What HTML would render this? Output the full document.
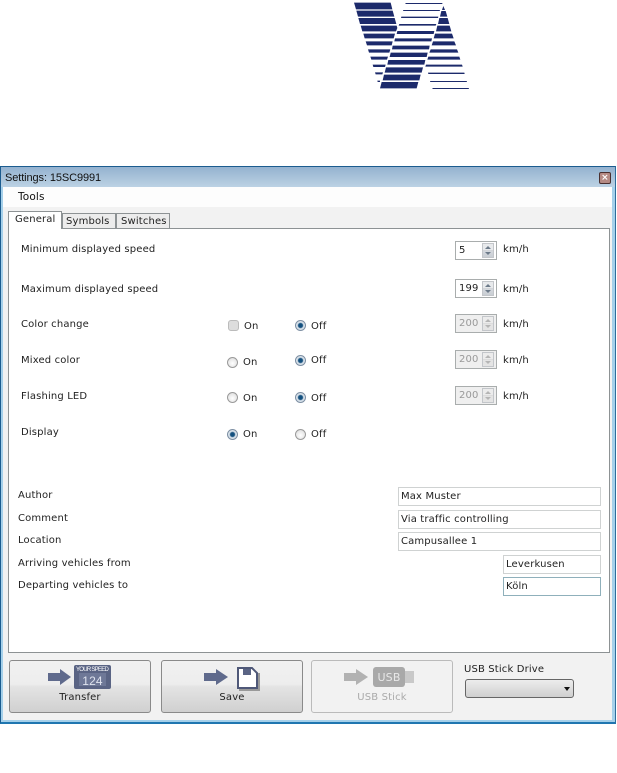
<!DOCTYPE html>
<html><head><meta charset="utf-8"><style>
html,body{margin:0;padding:0;background:#fff}
#p{position:relative;width:617px;height:773px;overflow:hidden;background:#fff;font-family:"DejaVu Sans",sans-serif;font-size:10px;color:#222;letter-spacing:.15px}
#p div{position:absolute;box-sizing:border-box}
.t{line-height:14px;height:14px;white-space:nowrap}
.in{background:#fff;border:1px solid #cfd2d2;line-height:18px;padding-left:2px;white-space:nowrap}
.sp{width:42px;height:19px;background:#fff;border:1px solid #a9adad;line-height:18px;padding-left:3px}
.sp.d{background:#efefef;color:#999}
.sb{left:26px;top:1px;width:12px;height:15px;background:linear-gradient(#e8eaec 0,#e8eaec 48%,#a9adb3 50%,#d5d9de 54%,#c9ced4 100%);border:1px solid #c3c6ca}
.sp.d .sb{background:linear-gradient(#ececec 0,#ececec 48%,#bbb 50%,#e4e4e4 54%)}
.sb:before,.sb:after{content:"";position:absolute;left:2px;width:0;height:0;border:3px solid transparent}
.sb:before{top:-1px;border-bottom:3px solid #6d7b8a}
.sb:after{top:8px;border-top:3px solid #6d7b8a}
.sp.d .sb:before{border-bottom-color:#b5b5b5}.sp.d .sb:after{border-top-color:#b5b5b5}
.r{width:11px;height:11px;border-radius:50%;border:1px solid #9a9a9a;background:radial-gradient(circle at 50% 60%,#fff,#d8d8d8)}
.r.c{background:radial-gradient(circle,#0f4f80 0,#17527f 32%,#cfdbe6 48%,#dfe6ec 70%);border-color:#7d8fa3}
.b{width:142px;height:53px;border:1px solid #8a8a8a;border-radius:3px;background:linear-gradient(#f1f1f1 0,#ededed 46%,#e4e4e4 50%,#d0d0d0 100%);text-align:center}
</style></head><body><div id="p">
<svg style="position:absolute;left:340px;top:0" width="140" height="100" viewBox="0 0 420 300"><g fill="#1c2a6b">
<polygon points="42,8 152,8 157,28 48,28"/><polygon points="49,32 158,32 163,50 54,50"/><polygon points="55,54 164,54 169,72 60,72"/><polygon points="62,77 170,77 172,84 168,94 67,94"/><polygon points="70,101 165,101 161,115 74,115"/><polygon points="77,124 158,124 155,136 81,136"/><polygon points="84,148 151,148 148,158 87,158"/><polygon points="91,170 144,170 141,179 94,179"/><polygon points="98,194 137,194 135,201 100,201"/><polygon points="105,217 129,217 127,223 107,223"/><polygon points="112,242 120,242 120,246 113,246"/>
<polygon points="197,9 307,9 307,12 196,12"/><polygon points="190,30 300,30 299,33 189,33"/><polygon points="184,50 295,50 294,54 183,54"/><polygon points="178,72 289,72 287,77 176,77"/><polygon points="172,93 283,93 281,102 170,102"/><polygon points="165,115 276,115 274,124 163,124"/><polygon points="158,137 269,137 267,148 156,148"/><polygon points="152,158 263,158 260,171 149,171"/><polygon points="145,180 256,180 253,194 142,194"/><polygon points="138,202 249,202 245,218 134,218"/><polygon points="132,224 242,224 238,241 128,241"/><polygon points="125,246 235,246 230,265 120,265"/>
<polygon points="310,18 315,30 306,30"/><polygon points="304,33 317,33 322,50 300,50"/><polygon points="298,54 323,54 328,72 294,72"/><polygon points="292,77 329,77 334,94 288,94"/><polygon points="285,101 336,101 341,115 281,115"/><polygon points="279,124 343,124 348,136 275,136"/><polygon points="272,148 351,148 355,158 268,158"/><polygon points="265,170 358,170 361,179 262,179"/><polygon points="258,194 366,194 368,200 256,200"/><polygon points="264,218 373,218 374,222 265,222"/><polygon points="270,243 380,243 381,246 271,246"/><polygon points="277,264 386,264 387,267 278,267"/>
</g></svg>

<div style="left:0;top:166px;width:616px;height:558px;background:#a5d0ea;border:1px solid #1b5c8f;border-right-color:#2c6d9c;border-bottom:2px solid #1f76b0"></div>
<div style="left:1px;top:167px;width:614px;height:20px;background:linear-gradient(#94b2cf,#bcd2e4)"></div>
<div class="t" style="left:5px;top:171px;font-family:'Liberation Sans',sans-serif;font-size:11px;color:#111;letter-spacing:-.1px">Settings: 15SC9991</div>
<div style="left:599px;top:172px;width:12px;height:12px;background:#b58a84;border:1px solid #4a3030;border-radius:2px;color:#fff;font-size:9px;line-height:10px;text-align:center;font-weight:bold">×</div>
<div style="left:3px;top:187px;width:609px;height:533px;background:#f2f2f2"></div>
<div style="left:3px;top:187px;width:609px;height:20px;background:#fdfdfd"></div>
<div class="t" style="left:18px;top:190px;font-size:10.5px;color:#111">Tools</div>

<div style="left:8px;top:228px;width:602px;height:425px;background:#fff;border:1px solid #8d9294"></div>
<div style="left:62px;top:213px;width:54px;height:16px;background:#ececec;border:1px solid #8d9294"></div>
<div style="left:116px;top:213px;width:54px;height:16px;background:#ececec;border:1px solid #8d9294"></div>
<div style="left:8px;top:211px;width:54px;height:18px;background:#fff;border:1px solid #8d9294;border-bottom:none"></div>
<div class="t" style="left:15px;top:213px">General</div>
<div class="t" style="left:66px;top:215px">Symbols</div>
<div class="t" style="left:121px;top:215px">Switches</div>

<div class="t" style="left:21px;top:243px">Minimum displayed speed</div>
<div class="t" style="left:21px;top:283px">Maximum displayed speed</div>
<div class="t" style="left:21px;top:318px">Color change</div>
<div class="t" style="left:21px;top:354px">Mixed color</div>
<div class="t" style="left:21px;top:390px">Flashing LED</div>
<div class="t" style="left:21px;top:426px">Display</div>

<div class="r" style="left:228px;top:320px;border-radius:3px;border-color:#bbb;background:#ddd"></div><div class="t" style="left:244px;top:320px">On</div>
<div class="r c" style="left:295px;top:320px"></div><div class="t" style="left:311px;top:320px">Off</div>
<div class="r" style="left:227px;top:357px"></div><div class="t" style="left:243px;top:356px">On</div>
<div class="r c" style="left:295px;top:355px"></div><div class="t" style="left:311px;top:354px">Off</div>
<div class="r" style="left:227px;top:392px"></div><div class="t" style="left:243px;top:392px">On</div>
<div class="r c" style="left:295px;top:392px"></div><div class="t" style="left:311px;top:392px">Off</div>
<div class="r c" style="left:227px;top:429px"></div><div class="t" style="left:243px;top:428px">On</div>
<div class="r" style="left:295px;top:429px"></div><div class="t" style="left:311px;top:428px">Off</div>

<div class="sp" style="left:455px;top:241px">5<div class="sb"></div></div>
<div class="sp" style="left:455px;top:279px">199<div class="sb"></div></div>
<div class="sp d" style="left:455px;top:314px">200<div class="sb"></div></div>
<div class="sp d" style="left:455px;top:350px">200<div class="sb"></div></div>
<div class="sp d" style="left:455px;top:386px">200<div class="sb"></div></div>
<div class="t" style="left:503px;top:243px">km/h</div>
<div class="t" style="left:503px;top:283px">km/h</div>
<div class="t" style="left:503px;top:318px">km/h</div>
<div class="t" style="left:503px;top:354px">km/h</div>
<div class="t" style="left:503px;top:390px">km/h</div>

<div class="t" style="left:18px;top:489px">Author</div>
<div class="t" style="left:18px;top:512px">Comment</div>
<div class="t" style="left:18px;top:534px">Location</div>
<div class="t" style="left:18px;top:557px">Arriving vehicles from</div>
<div class="t" style="left:18px;top:579px">Departing vehicles to</div>
<div class="in" style="left:398px;top:487px;width:203px;height:19px">Max Muster</div>
<div class="in" style="left:398px;top:510px;width:203px;height:19px">Via traffic controlling</div>
<div class="in" style="left:398px;top:532px;width:203px;height:19px">Campusallee 1</div>
<div class="in" style="left:503px;top:555px;width:98px;height:19px">Leverkusen</div>
<div class="in" style="left:503px;top:577px;width:98px;height:19px;border-color:#8fb0bb">Köln</div>

<div class="b" style="left:9px;top:660px"></div>
<div class="b" style="left:161px;top:660px"></div>
<div class="b" style="left:311px;top:660px;border-color:#bbb;background:#f2f2f2"></div>
<svg style="position:absolute;left:0;top:660px" width="460" height="40">
<g fill="#5f6a8c"><polygon points="48,13 60,13 60,9 71,17 60,25 60,21 48,21"/><polygon points="204,13 216,13 216,9 228,17 216,25 216,21 204,21"/></g>
<rect x="74" y="5" width="37" height="24" rx="2" fill="#5a6484"/><rect x="79" y="13" width="27" height="13" fill="#6e7897"/>
<text x="92.5" y="11" font-size="6" font-family="Liberation Sans" fill="#fff" text-anchor="middle" textLength="33">YOUR SPEED</text>
<text x="92.5" y="25" font-size="12" font-family="Liberation Sans" fill="#dfe3ee" text-anchor="middle">124</text>
<path d="M238 8h14l5 5v15h-19z" fill="#fff" stroke="#4f5878" stroke-width="2"/><rect x="243" y="9" width="8" height="6" fill="#5a6484"/><path d="M259 13v17h-20" fill="none" stroke="#999" stroke-width="2"/>
<polygon points="344,13 356,13 356,9 368,17 356,25 356,21 344,21" fill="#b2b2b2"/>
<rect x="373" y="7" width="32" height="20" rx="3" fill="#a9a9a9"/><rect x="405" y="11" width="9" height="12" fill="#c9c9c9"/>
<text x="389" y="21" font-size="11" font-family="DejaVu Sans" fill="#e8e8e8" text-anchor="middle">USB</text>
</svg>
<div class="t" style="left:9px;top:691px;width:142px;text-align:center">Transfer</div>
<div class="t" style="left:161px;top:691px;width:142px;text-align:center">Save</div>
<div class="t" style="left:311px;top:691px;width:142px;text-align:center;color:#aaa">USB Stick</div>
<div class="t" style="left:464px;top:663px">USB Stick Drive</div>
<div style="left:465px;top:679px;width:109px;height:19px;border:1px solid #666;border-radius:3px;background:linear-gradient(#ededed,#cfcfcf)"></div>
<div style="left:564px;top:687px;width:0;height:0;border:3px solid transparent;border-top:4px solid #111"></div>
</div></body></html>
